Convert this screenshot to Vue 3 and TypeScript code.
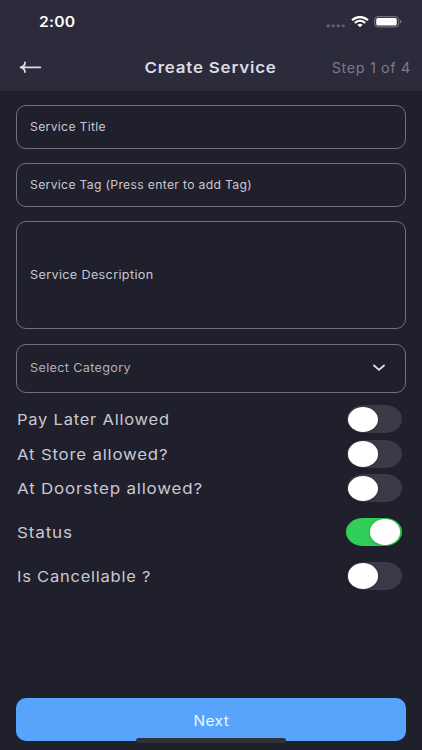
<script setup lang="ts">
import { ref } from 'vue'

interface Toggle {
  label: string
  id: string
  on: boolean
}

const fields = [
  { id: 'name', label: 'Service Title' },
  { id: 'tag', label: 'Service Tag (Press enter to add Tag)' },
  { id: 'description', label: 'Service Description' },
]

const toggles = ref<Toggle[]>([
  { id: 'pay', label: 'Pay Later Allowed', on: false },
  { id: 'store', label: 'At Store allowed?', on: false },
  { id: 'door', label: 'At Doorstep allowed?', on: false },
  { id: 'status', label: 'Status', on: true },
  { id: 'cancel', label: 'Is Cancellable ?', on: false },
])
</script>

<template>
  <main class="screen">
    <header class="header">
      <div class="status-bar">
        <span class="time">2:00</span>
        <div class="indicators">
          <svg class="dots" width="20" height="4" viewBox="0 0 20 4" fill="#62616e">
            <rect x="0.6" y="0.6" width="3.2" height="2.6" rx="0.9" />
            <rect x="5.6" y="0.6" width="3.2" height="2.6" rx="0.9" />
            <rect x="10.6" y="0.6" width="3.2" height="2.6" rx="0.9" />
            <rect x="15.6" y="0.6" width="3.2" height="2.6" rx="0.9" />
          </svg>
          <svg class="wifi" width="18" height="12" viewBox="0 0 18 12" fill="none" stroke="#fff">
            <path d="M1 4.1Q9-2.1 17 4.1" stroke-width="2.2" />
            <path d="M3.8 6.9Q9 2.7 14.2 6.9" stroke-width="2" />
            <path d="M6.3 8.7Q9 6.7 11.7 8.7L9 11.2Z" fill="#fff" stroke="none" />
          </svg>
          <svg class="battery" width="28" height="12" viewBox="0 0 28 12">
            <rect x="0.7" y="0.7" width="24" height="10.2" rx="3" fill="none" stroke="#817f89" />
            <rect x="2.2" y="2.1" width="20.6" height="7.5" rx="1.7" fill="#fff" />
            <path d="M26 4Q27.5 4.6 27.5 5.8T26 7.6Z" fill="#817f89" />
          </svg>
        </div>
      </div>
      <div class="nav">
        <button class="back" aria-label="Back">
          <svg width="24" height="16" viewBox="0 0 24 16" fill="none" stroke="#dddce6" stroke-width="1.8" stroke-linecap="round" stroke-linejoin="round">
            <path d="M22.3 7.3H3M7 2.5C7 5 5.2 6.7 2.6 7.3C5.2 7.9 7 9.6 7 12.1" />
          </svg>
        </button>
        <h1 class="title"><span>Create Service</span></h1>
        <span class="step">Step 1 of 4</span>
      </div>
    </header>

    <form class="form" @submit.prevent>
      <div v-for="field in fields" :key="field.id" class="field" :class="field.id">
        <span class="field-text">{{ field.label }}</span>
      </div>
      <div class="field select">
        <span class="field-text">Select Category</span>
        <svg width="14" height="8" viewBox="0 0 14 8" fill="none" stroke="#dcdbe2" stroke-width="1.9" stroke-linecap="round" stroke-linejoin="round">
          <path d="M2 1.5L7 5.9L12 1.5" />
        </svg>
      </div>

      <div class="toggles">
        <div v-for="item in toggles" :key="item.id" class="toggle-row" :class="item.id">
          <span class="toggle-label">{{ item.label }}</span>
          <button
            class="switch"
            :class="{ on: item.on }"
            role="switch"
            type="button"
            :aria-checked="item.on"
            @click="item.on = !item.on"
          >
            <span class="knob"></span>
          </button>
        </div>
      </div>

      <button class="next" type="button"><span>Next</span></button>
    </form>
    <div class="home-indicator"></div>
  </main>
</template>

<style>
body {
  background: #201f2c;
}
</style>

<style scoped>
.screen {
  --stretch: 1.1;
  position: relative;
  display: flex;
  flex-direction: column;
  width: 422px;
  height: 750px;
  overflow: hidden;
  box-sizing: border-box;
  background: #201f2c;
  color: #c9c8d1;
  font-family: Inter, 'Noto Sans', sans-serif;
}
.screen * {
  box-sizing: border-box;
}
button {
  border: 0;
  padding: 0;
  background: none;
  font: inherit;
}
.header {
  flex: none;
  height: 92px;
  background: #2b2b3c;
  border-bottom: 1px solid #1c1b27;
}
.status-bar {
  display: flex;
  justify-content: space-between;
  height: 44px;
  padding: 12px 20px 0 38.5px;
}
.time {
  color: #fff;
  font-size: 14px;
  font-weight: 600;
  line-height: 20px;
  letter-spacing: 0.2px;
  transform: scaleX(1.12);
  transform-origin: left;
}
.indicators {
  display: flex;
  align-items: flex-start;
}
.dots {
  margin: 12px 5px 0 0;
}
.wifi {
  margin: 4px 5px 0 0;
}
.battery {
  margin-top: 4px;
}
.nav {
  display: grid;
  grid-template-columns: 1fr auto 1fr;
  align-items: center;
  height: 47px;
  padding: 0 11px 0 18px;
}
.back {
  display: flex;
}
.title {
  margin: 0 7px 0 0;
  color: #dddce6;
  font-size: 15px;
  font-weight: 600;
  line-height: 20px;
  letter-spacing: 0.7px;
}
.title span,
.next span {
  display: inline-block;
  transform: scaleX(var(--stretch));
}
.title span {
  --stretch: 1.13;
}
.step {
  justify-self: end;
  color: #7b7a88;
  font-size: 14px;
  line-height: 20px;
  letter-spacing: 0.6px;
  transform: scaleX(1.03);
  transform-origin: right;
}
.form {
  flex: 1;
  display: flex;
  flex-direction: column;
  padding: 13px 16px 9px;
}
.field {
  display: flex;
  align-items: center;
  justify-content: space-between;
  flex: none;
  height: 44px;
  margin-bottom: 14.4px;
  padding: 0 19px 0 12.5px;
  border: 1px solid #72717d;
  border-radius: 10px;
}
.field-text {
  font-size: 11.5px;
  line-height: 18px;
  letter-spacing: 0.3px;
  transform: scaleX(var(--stretch));
  transform-origin: left;
}
.name {
  --stretch: 1.06;
}
.tag {
  --stretch: 1.06;
}
.description {
  height: 108px;
  margin-top: -0.4px;
}
.select {
  height: 49px;
  margin-bottom: 12.6px;
}
.select .field-text {
  color: #b2b1bc;
}
.toggles {
  display: flex;
  flex-direction: column;
}
.toggle-row {
  display: flex;
  align-items: center;
  justify-content: space-between;
  height: 28px;
  margin-bottom: 6.5px;
  padding: 0 4.5px 0 0.5px;
}
.pay {
  --stretch: 1.1;
}
.store {
  --stretch: 1.122;
}
.door {
  --stretch: 1.13;
  margin-bottom: 15.8px;
}
.status {
  --stretch: 1.14;
  margin-bottom: 16px;
}
.toggle-label {
  padding-top: 2px;
  font-size: 15px;
  line-height: 20px;
  letter-spacing: 0.7px;
  transform: scaleX(var(--stretch));
  transform-origin: left;
}
.switch {
  display: flex;
  align-items: center;
  width: 55px;
  height: 28px;
  padding: 0 1px;
  border-radius: 17px / 14px;
  background: #3b3a46;
}
.switch.on {
  width: 56px;
  padding: 0 1.5px;
  justify-content: flex-end;
  background: #31cf59;
}
.knob {
  width: 30.5px;
  height: 25.5px;
  border-radius: 50%;
  background: #fff;
  box-shadow: 0 1px 4px #0003;
}
.next {
  height: 43px;
  margin-top: auto;
  padding-top: 1px;
  border-radius: 10px;
  background: #58a4fd;
  color: #f0f5ff;
  font-size: 14px;
  letter-spacing: 0.4px;
}
.home-indicator {
  position: absolute;
  left: 136px;
  bottom: 7px;
  width: 150px;
  height: 5px;
  border-radius: 3px;
  background: #30323a;
}
</style>
